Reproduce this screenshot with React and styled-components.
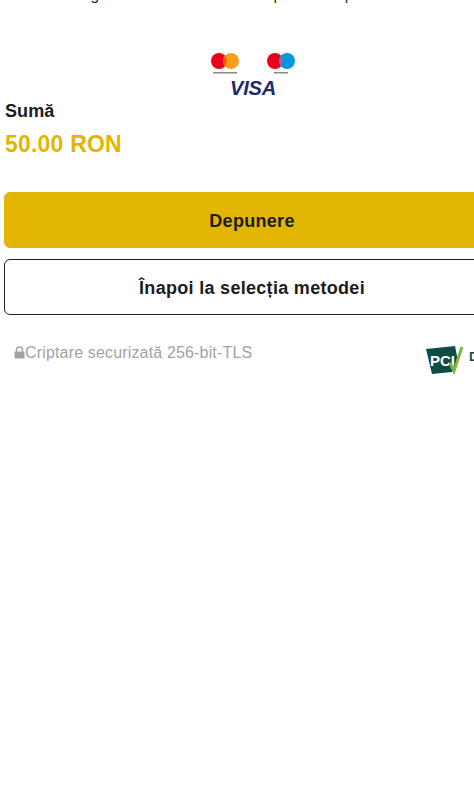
import styled, { createGlobalStyle } from 'styled-components'

const GlobalStyle = createGlobalStyle`
    html, body {
        margin: 0;
        padding: 0;
        height: 100%;
        overflow: hidden;
        background-color: #fff;
    }
    body {
        font-family: "Liberation Sans", Arial, sans-serif;
    }
`

const Page = styled.div`
    width: 496px;
    margin-left: 4px;
    display: flex;
    flex-direction: column;
`

const Intro = styled.p`
    margin: -16px 0 0;
    font-size: 16px;
    line-height: 22px;
    color: #333;
    white-space: nowrap;
`

const Logos = styled.div`
    display: flex;
    flex-direction: column;
    align-items: center;
    margin-top: 46px;
`

const CardRow = styled.div`
    display: flex;
    gap: 26px;
    margin-left: 2px;
`

const CardMark = styled.svg`
    display: block;
    width: 30px;
    height: 24px;
`

const VisaMark = styled.span`
    font-size: 20px;
    line-height: 15px;
    font-weight: 700;
    font-style: italic;
    letter-spacing: -0.2px;
    color: #1a2a6c;
    margin-top: 5px;
    margin-left: 2px;
`

const Label = styled.div`
    margin-top: 4px;
    padding-left: 1px;
    font-size: 18px;
    line-height: 22px;
    font-weight: 700;
    letter-spacing: 0.1px;
    color: #1c1c1c;
`

const Amount = styled.div`
    margin-top: 8px;
    padding-left: 1px;
    font-size: 23px;
    line-height: 28px;
    font-weight: 700;
    letter-spacing: 0.2px;
    color: #e3b505;
`

const Actions = styled.div`
    display: flex;
    flex-direction: column;
    gap: 11px;
    margin-top: 34px;
`

const Button = styled.button`
    display: block;
    width: 100%;
    height: 56px;
    padding: 2px 0 0;
    border-radius: 6px;
    border: 1px solid ${props => props.$primary ? '#e3b505' : '#222'};
    background-color: ${props => props.$primary ? '#e3b505' : '#fff'};
    color: #1c1c1c;
    font-family: inherit;
    font-size: 18px;
    font-weight: 700;
    letter-spacing: 0.3px;
`

const Footer = styled.div`
    display: flex;
    align-items: flex-start;
    justify-content: space-between;
    margin-top: 24px;
    padding-left: 10px;
`

const Secure = styled.div`
    display: flex;
    align-items: center;
    margin-top: 5px;
    font-size: 16px;
    letter-spacing: 0.16px;
    color: #a3a3a3;
`

const LockIcon = styled.svg`
    display: block;
    width: 11px;
    height: 13px;
    margin-top: -2px;
`

const PciMark = styled.svg`
    display: block;
    width: 75px;
    height: 30px;
    margin-top: 6px;
`

const Mastercard = () => (
    <CardMark viewBox="0 0 30 24">
        <circle cx="9" cy="9" r="8" fill="#eb001b" />
        <circle cx="21" cy="9" r="8" fill="#f79e1b" />
        <path d="M15 3.7a8 8 0 0 1 0 10.6a8 8 0 0 1 0-10.6z" fill="#ff5f00" />
        <rect x="3" y="20" width="24" height="1.5" fill="#8a8a8a" />
    </CardMark>
)

const Maestro = () => (
    <CardMark viewBox="0 0 30 24">
        <circle cx="9" cy="9" r="8" fill="#eb001b" />
        <circle cx="21" cy="9" r="8" fill="#0099df" />
        <path d="M15 3.7a8 8 0 0 1 0 10.6a8 8 0 0 1 0-10.6z" fill="#7673c0" />
        <rect x="8" y="20" width="14" height="1.5" fill="#8a8a8a" />
    </CardMark>
)

const App = () => (
    <Page>
        <GlobalStyle />
        <Intro>Pentru a alege suma dorită din contul pentru ca plata să fie efectuată</Intro>
        <Logos>
            <CardRow>
                <Mastercard />
                <Maestro />
            </CardRow>
            <VisaMark>VISA</VisaMark>
        </Logos>
        <Label>Sumă</Label>
        <Amount>50.00 RON</Amount>
        <Actions>
            <Button $primary>Depunere</Button>
            <Button>Înapoi la selecția metodei</Button>
        </Actions>
        <Footer>
            <Secure>
                <LockIcon viewBox="0 0 11 13">
                    <path d="M2.5 6V4a3 3 0 0 1 6 0v2" fill="none" stroke="#a3a3a3" strokeWidth="1.4" />
                    <rect x="0.5" y="5.5" width="10" height="7" rx="1" fill="#a3a3a3" />
                </LockIcon>
                Criptare securizată 256-bit-TLS
            </Secure>
            <PciMark viewBox="0 0 75 30">
                <path d="M1 4L30 1L33 16L27 27L7 29z" fill="#0f4c45" />
                <text x="5" y="21" fontFamily="Liberation Sans" fontSize="15" fontWeight="700" fill="#fff">PCI</text>
                <path d="M25 18l4 8l8-24" fill="none" stroke="#7ab648" strokeWidth="3" />
                <text x="44" y="16" fontFamily="Liberation Sans" fontSize="13" fontWeight="700" fill="#0f4c45">DSS</text>
            </PciMark>
        </Footer>
    </Page>
)

export default App
